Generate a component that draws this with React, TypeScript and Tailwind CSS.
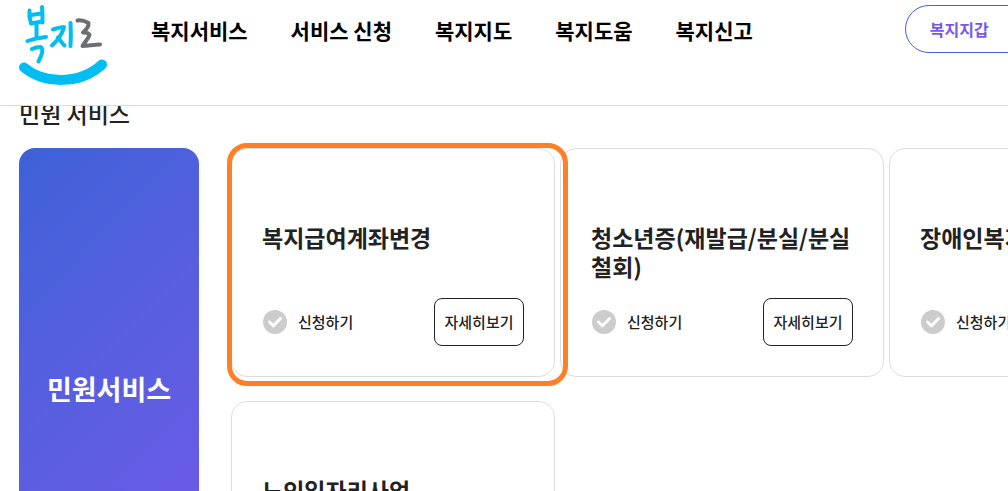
const menu = ['복지서비스', '서비스 신청', '복지지도', '복지도움', '복지신고']

const services = [
  { title: '복지급여계좌변경', focused: true },
  { title: '청소년증(재발급/분실/분실철회)' },
  { title: '장애인복지카드' },
  { title: '노인일자리사업' },
]

function Logo() {
  return (
    <svg className="w-[88px] h-[82px]" viewBox="19 4 88 82" fill="none" strokeLinecap="round" strokeLinejoin="round" role="img" aria-label="복지로">
      <g stroke="#00bdf2" strokeWidth="4">
        <path d="M29.5 10.5C29 14 29.500 19 31 23" />
        <path d="M42 7C42.500 12 42.500 17 42.500 22.500" />
        <path d="M31 15L41 13.500" />
        <path d="M31 23.500L42 21.500" />
        <path d="M36.500 23V37" />
        <path d="M27.500 41C34 38.500 40 37.500 46 37" />
        <path d="M32 49C35 47.500 38 47 40.500 47C44 48.500 42 55 38.500 61.500" />
        <path d="M53 29.500C57 28.500 61 27 64 27C62 35 57 41 52 45.500" />
        <path d="M58 37.500C60 40.500 62 43 64.500 45.500" />
        <path d="M70.500 23C71 31 71 38 70.500 46" />
      </g>
      <path d="M77.500 20.500C80 20 83 20 88.500 23C89 27 86 30 83 32.500C86 32.500 89 33 89.500 35C88 39 85 42 82.500 46C88 46 94 44.500 100 44.500" stroke="#6d6e73" strokeWidth="4" />
      <path d="M24 67.500C44 84 80 85 102 64.500" stroke="#00bdf2" strokeWidth="10" />
    </svg>
  )
}

function ServiceCard({ title, focused }: { title: string; focused?: boolean }) {
  return (
    <li className="relative flex flex-col justify-between h-[229px] p-[30px] border border-[#dddddd] rounded-2xl">
      <h3 className="mt-11 text-[23px] leading-[29px] font-bold text-[#222222]">{title}</h3>
      <div className="flex items-center justify-between">
        <div className="flex items-center gap-[11px] pl-px">
          <svg className="w-6 h-6" viewBox="0 0 24 24" fill="none">
            <circle cx="12" cy="12" r="12" fill="#cccccc" />
            <path d="M6.500 12L10.500 15.800L17.500 8.500" stroke="#ffffff" strokeWidth="3" strokeLinecap="round" strokeLinejoin="round" />
          </svg>
          <span className="text-[15px] font-medium text-[#222222]">신청하기</span>
        </div>
        <button type="button" className="w-[90px] h-12 border border-[#222222] rounded-lg text-[15px] font-medium text-[#222222]">
          자세히보기
        </button>
      </div>
      {focused && (
        <div className="absolute -top-1.5 -left-[5px] -right-[14px] -bottom-2.5 z-10 border-5 border-[#ff7f27] rounded-[20px] pointer-events-none" />
      )}
    </li>
  )
}

export default function App() {
  return (
    <div className="h-screen overflow-hidden bg-white font-['Noto_Sans_CJK_KR',sans-serif]">
      <header className="relative z-20 flex items-start w-full h-[106px] pl-[19px] pt-1 bg-white border-b border-[#dddddd]">
        <a href="#" className="shrink-0">
          <Logo />
        </a>
        <nav className="flex shrink-0 gap-[43px] ml-11 pt-2.5">
          {menu.map((item) => (
            <a key={item} href="#" className="text-[21px] leading-8 font-bold text-black">
              {item}
            </a>
          ))}
        </nav>
        <button type="button" className="shrink-0 w-36 h-12 mt-px ml-[152px] px-6 border border-[#3f62d8] rounded-full text-base text-left font-bold text-[#7659e8]">
          복지지갑
        </button>
      </header>

      <main className="-mt-2.5 pl-[19px]">
        <h2 className="text-[23px] leading-[34px] font-medium text-[#222222]">민원 서비스</h2>
        <section className="flex gap-8 mt-[18px]">
          <div className="flex shrink-0 items-center justify-center w-[180px] rounded-2xl bg-linear-135 from-[#3d62d8] to-[#7259ea]">
            <strong className="text-[27px] font-bold text-white">민원서비스</strong>
          </div>
          <ul className="grid grid-cols-[repeat(3,324px)] gap-x-[5px] gap-y-6">
            {services.map((service) => (
              <ServiceCard key={service.title} {...service} />
            ))}
          </ul>
        </section>
      </main>
    </div>
  )
}
